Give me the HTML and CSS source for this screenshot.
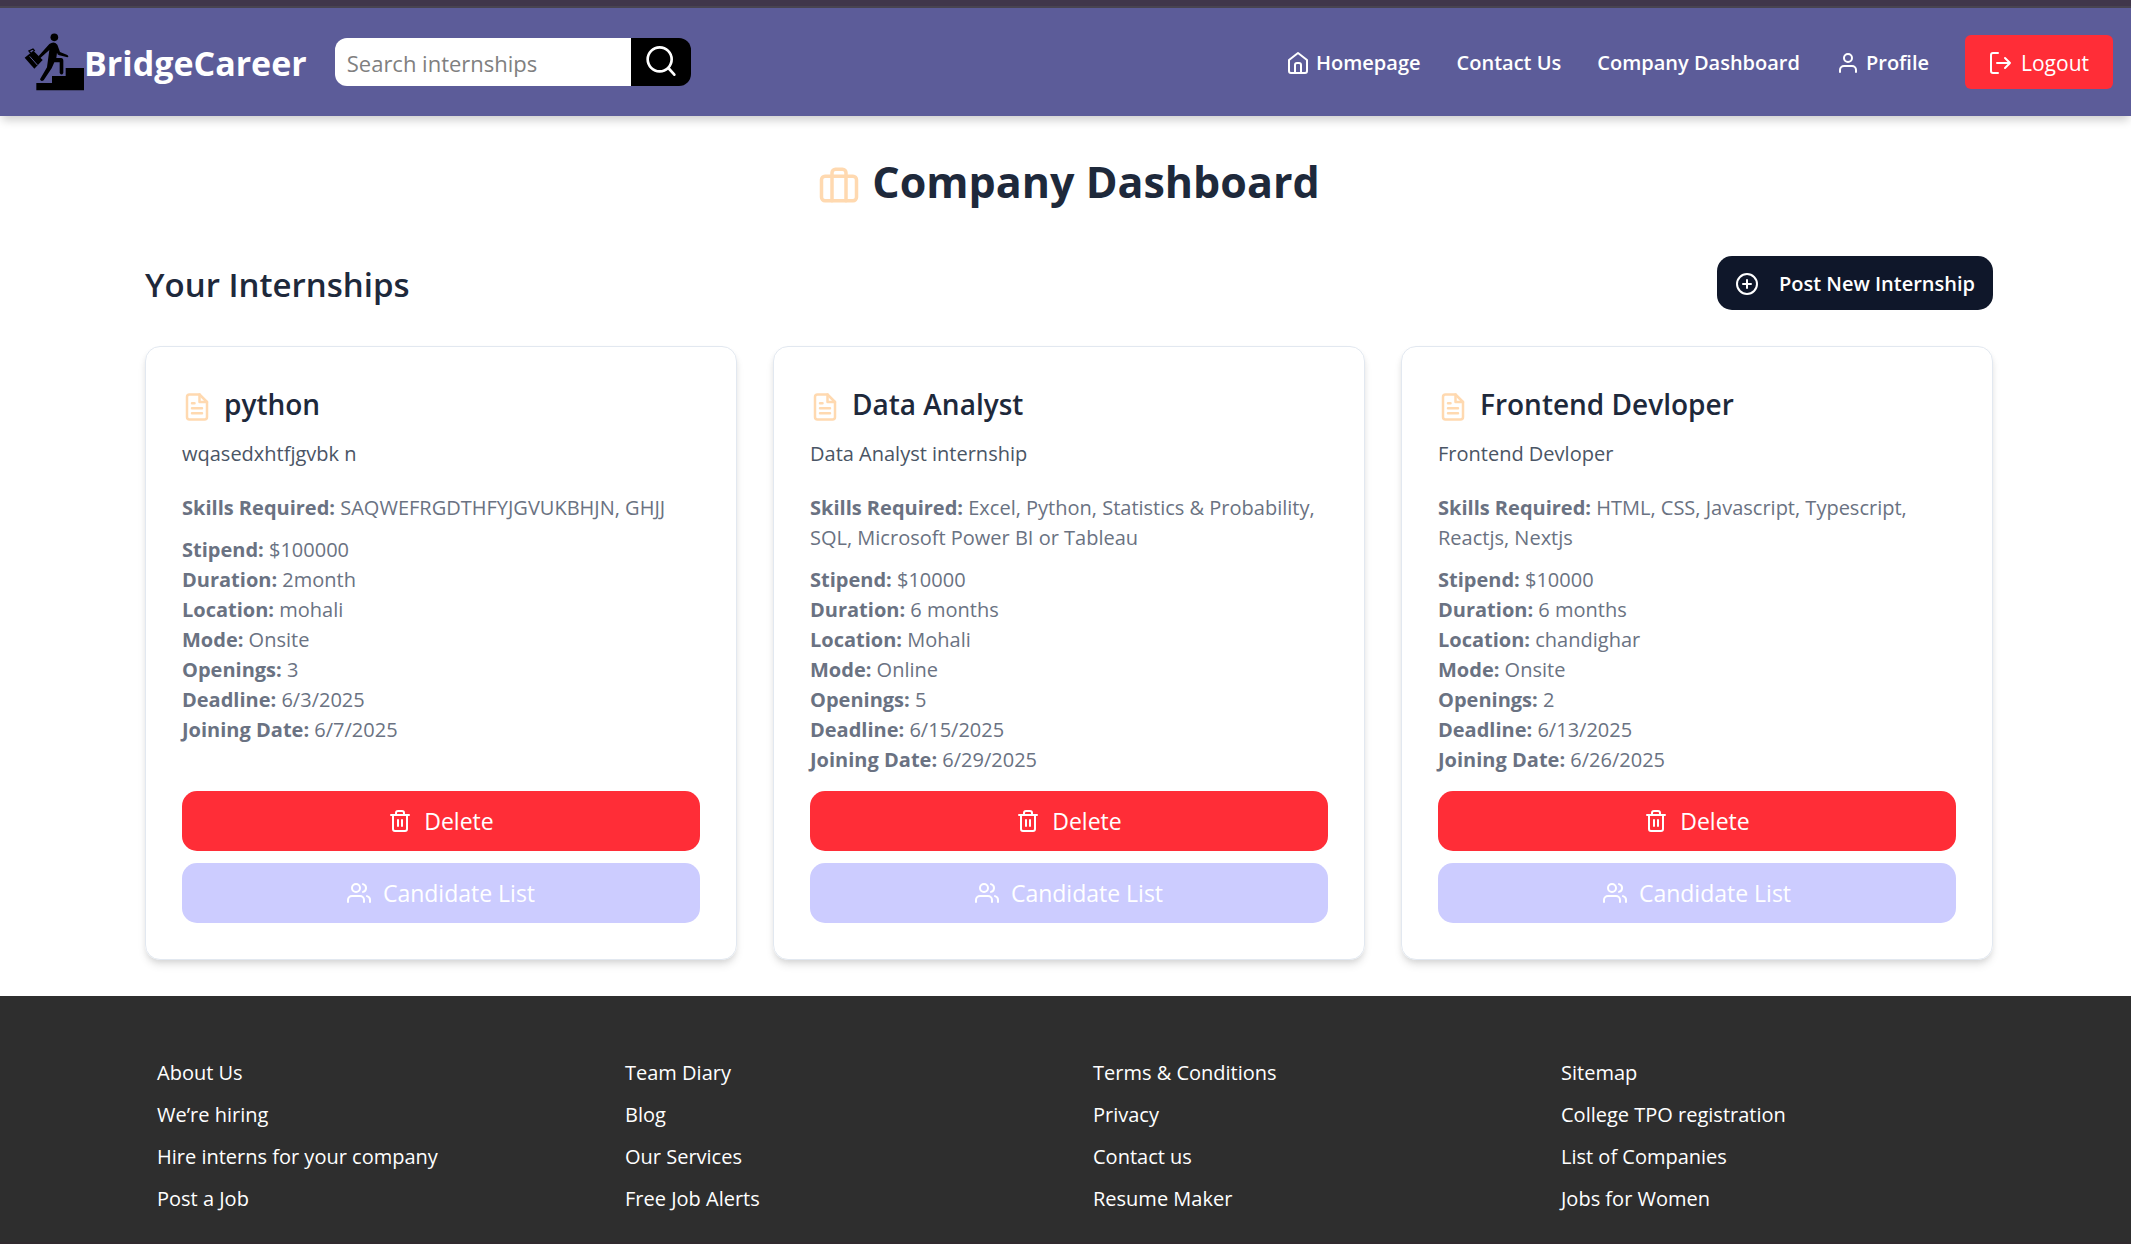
FILE: index.html
```html
<!DOCTYPE html>
<html lang="en">
<head>
<meta charset="utf-8">
<title>BridgeCareer - Company Dashboard</title>
<link rel="stylesheet" href="styles.css">
</head>
<body>
<svg class="sprite" aria-hidden="true">
  <symbol id="file" viewBox="0 0 24 24"><path d="M14 2H6a2 2 0 0 0-2 2v16a2 2 0 0 0 2 2h12a2 2 0 0 0 2-2V8z"/><path d="M14 2v6h6M16 13H8M16 17H8M10 9H8"/></symbol>
  <symbol id="trash" viewBox="0 0 24 24"><path d="M3 6h18M19 6v14a2 2 0 0 1-2 2H7a2 2 0 0 1-2-2V6M8 6V4a2 2 0 0 1 2-2h4a2 2 0 0 1 2 2v2M10 11v6M14 11v6"/></symbol>
  <symbol id="users" viewBox="0 0 24 24"><path d="M17 21v-2a4 4 0 0 0-4-4H5a4 4 0 0 0-4 4v2"/><circle cx="9" cy="7" r="4"/><path d="M23 21v-2a4 4 0 0 0-3-3.87M16 3.13a4 4 0 0 1 0 7.75"/></symbol>
</svg>
<header class="header">
  <a class="brand" href="#">
    <svg class="brand-logo" viewBox="12 24 180 174" aria-hidden="true">
      <circle cx="103" cy="37" r="11.500"/>
      <path d="M49 196v-22h47v-21h41v-24h55v67z"/>
      <path d="M14 98l26-21 28 28-25 26z"/>
      <path d="M32 84l-5-6 12-6 5 6" fill="none" stroke="#000" stroke-width="4"/>
      <path d="M29 94l23 26" fill="none" stroke="#5c5c99" stroke-width="3"/>
      <path d="M88 57q14-10 24 2l8 22 22 9q6 5 0 7l-24-6q-6-2-7-8l-2 16h14q7 0 7 8v37q-5 9-11 0v-32h-16l-8 18-24 36q-8 5-11-3l21-36 7-52-27 24q-6 0-5-6z"/>
    </svg>
    <span>BridgeCareer</span>
  </a>
  <form class="search">
    <input class="search-input" type="text" placeholder="Search internships" aria-label="Search internships">
    <button class="search-button" type="button" aria-label="Search">
      <svg class="icon icon-lg" viewBox="0 0 24 24"><circle cx="11" cy="10" r="9"/><path d="M22 21.500l-4.500-5"/></svg>
    </button>
  </form>
  <nav class="nav">
    <a class="nav-link" href="#"><svg class="icon icon-md" viewBox="0 0 24 24"><path d="M3 9l9-7 9 7v11a2 2 0 0 1-2 2H5a2 2 0 0 1-2-2z"/><path d="M9 22v-8q0-2 2-2h2q2 0 2 2v8"/></svg>Homepage</a>
    <a class="nav-link" href="#">Contact Us</a>
    <a class="nav-link" href="#">Company Dashboard</a>
    <a class="nav-link" href="#"><svg class="icon icon-md" viewBox="0 0 24 24"><path d="M20 21v-2a4 4 0 0 0-4-4H8a4 4 0 0 0-4 4v2"/><circle cx="12" cy="7" r="4"/></svg>Profile</a>
    <button class="logout" type="button"><svg class="icon icon-md" viewBox="0 0 24 24"><path d="M9 22H4a2 2 0 0 1-2-2V4a2 2 0 0 1 2-2h5M16 17l5-5-5-5M21 12H8"/></svg>Logout</button>
  </nav>
</header>
<main class="main">
  <div class="container">
    <h1 class="title"><svg class="icon icon-title" viewBox="0 0 24 24" aria-hidden="true"><rect x="2" y="7" width="20" height="14" rx="2"/><path d="M16 21V5a2 2 0 0 0-2-2h-4a2 2 0 0 0-2 2v16"/></svg>Company Dashboard</h1>
    <div class="toolbar">
      <h2 class="subtitle">Your Internships</h2>
      <button class="post" type="button"><svg class="icon icon-md" viewBox="0 0 24 24"><circle cx="12" cy="12" r="10"/><path d="M12 8v8M8 12h8"/></svg>Post New Internship</button>
    </div>
    <div class="cards">
      <article class="card">
        <h3 class="card-title"><svg class="icon icon-file" aria-hidden="true"><use href="#file"/></svg>python</h3>
        <p class="summary">wqasedxhtfjgvbk n</p>
        <p class="skills"><strong>Skills Required:</strong> SAQWEFRGDTHFYJGVUKBHJN, GHJJ</p>
        <ul class="facts">
          <li><strong>Stipend:</strong> $100000</li>
          <li><strong>Duration:</strong> 2month</li>
          <li><strong>Location:</strong> mohali</li>
          <li><strong>Mode:</strong> Onsite</li>
          <li><strong>Openings:</strong> 3</li>
          <li><strong>Deadline:</strong> 6/3/2025</li>
          <li><strong>Joining Date:</strong> 6/7/2025</li>
        </ul>
        <div class="actions">
          <button class="action delete" type="button"><svg class="icon icon-md" aria-hidden="true"><use href="#trash"/></svg>Delete</button>
          <button class="action candidates" type="button"><svg class="icon icon-md" aria-hidden="true"><use href="#users"/></svg>Candidate List</button>
        </div>
      </article>
      <article class="card">
        <h3 class="card-title"><svg class="icon icon-file" aria-hidden="true"><use href="#file"/></svg>Data Analyst</h3>
        <p class="summary">Data Analyst internship</p>
        <p class="skills"><strong>Skills Required:</strong> Excel, Python, Statistics &amp; Probability, SQL, Microsoft Power BI or Tableau</p>
        <ul class="facts">
          <li><strong>Stipend:</strong> $10000</li>
          <li><strong>Duration:</strong> 6 months</li>
          <li><strong>Location:</strong> Mohali</li>
          <li><strong>Mode:</strong> Online</li>
          <li><strong>Openings:</strong> 5</li>
          <li><strong>Deadline:</strong> 6/15/2025</li>
          <li><strong>Joining Date:</strong> 6/29/2025</li>
        </ul>
        <div class="actions">
          <button class="action delete" type="button"><svg class="icon icon-md" aria-hidden="true"><use href="#trash"/></svg>Delete</button>
          <button class="action candidates" type="button"><svg class="icon icon-md" aria-hidden="true"><use href="#users"/></svg>Candidate List</button>
        </div>
      </article>
      <article class="card">
        <h3 class="card-title"><svg class="icon icon-file" aria-hidden="true"><use href="#file"/></svg>Frontend Devloper</h3>
        <p class="summary">Frontend Devloper</p>
        <p class="skills"><strong>Skills Required:</strong> HTML, CSS, Javascript, Typescript, Reactjs, Nextjs</p>
        <ul class="facts">
          <li><strong>Stipend:</strong> $10000</li>
          <li><strong>Duration:</strong> 6 months</li>
          <li><strong>Location:</strong> chandighar</li>
          <li><strong>Mode:</strong> Onsite</li>
          <li><strong>Openings:</strong> 2</li>
          <li><strong>Deadline:</strong> 6/13/2025</li>
          <li><strong>Joining Date:</strong> 6/26/2025</li>
        </ul>
        <div class="actions">
          <button class="action delete" type="button"><svg class="icon icon-md" aria-hidden="true"><use href="#trash"/></svg>Delete</button>
          <button class="action candidates" type="button"><svg class="icon icon-md" aria-hidden="true"><use href="#users"/></svg>Candidate List</button>
        </div>
      </article>
    </div>
  </div>
</main>
<footer class="footer">
  <div class="footer-grid">
    <ul class="footer-list"><li><a href="#">About Us</a></li><li><a href="#">We’re hiring</a></li><li><a href="#">Hire interns for your company</a></li><li><a href="#">Post a Job</a></li></ul>
    <ul class="footer-list"><li><a href="#">Team Diary</a></li><li><a href="#">Blog</a></li><li><a href="#">Our Services</a></li><li><a href="#">Free Job Alerts</a></li></ul>
    <ul class="footer-list"><li><a href="#">Terms &amp; Conditions</a></li><li><a href="#">Privacy</a></li><li><a href="#">Contact us</a></li><li><a href="#">Resume Maker</a></li></ul>
    <ul class="footer-list"><li><a href="#">Sitemap</a></li><li><a href="#">College TPO registration</a></li><li><a href="#">List of Companies</a></li><li><a href="#">Jobs for Women</a></li></ul>
  </div>
</footer>
</body>
</html>
```
FILE: styles.css
```css
* { box-sizing: border-box; }
body, h1, h2, h3, p, ul { margin: 0; padding: 0; }
ul { list-style: none; }
a { color: inherit; text-decoration: none; }
button, input { font: inherit; border: 0; }
button { cursor: pointer; }
body {
  font-family: "Open Sans", "Noto Sans", sans-serif;
  font-size: 20px;
  line-height: 30px;
  color: #1e293b;
  background: #fff;
}
.sprite { display: none; }
.icon { fill: none; stroke: currentColor; stroke-width: 2; stroke-linecap: round; stroke-linejoin: round; flex: none; }
.icon-md { width: 24px; height: 24px; }
.icon-lg { width: 32px; height: 32px; }
.icon-title, .icon-file { margin-top: 6px; color: #ffd9b0; }
.icon-title { width: 42px; height: 42px; }
.icon-file { width: 30px; height: 30px; }

.header {
  display: flex;
  align-items: center;
  height: 116px;
  padding: 2px 18px 0 24px;
  border-top: 6px solid #40364a;
  background: #5c5c99;
  color: #fff;
  box-shadow: inset 0 2px #484350, 0 6px 9px -2px rgba(0, 0, 0, .2);
}
.brand { display: flex; align-items: center; font-size: 34px; font-weight: 700; line-height: 48px; }
.brand-logo { width: 60px; height: 58px; }
.brand span { padding-top: 2px; }
.search { display: flex; height: 48px; width: 356px; margin-left: 28px; border-radius: 12px; overflow: hidden; }
.search-input { flex: 1; min-width: 0; padding: 2px 12px 0; font-size: 22px; background: #fff; }
.search-input::placeholder { color: #808080; opacity: 1; }
.search-button { display: flex; align-items: center; justify-content: center; width: 60px; padding: 0; background: #000; color: #fff; }
.nav { display: flex; align-items: center; gap: 36px; margin-left: auto; font-weight: 600; }
.nav-link { display: flex; align-items: center; gap: 6px; padding-top: 2px; }
.logout { display: flex; align-items: center; gap: 8px; height: 54px; padding: 2px 24px 0; border-radius: 6px; background: #ff2d37; color: #fff; font-size: 21px; font-weight: 400; }

.main { padding: 36px 36px 36px 43px; }
.container { max-width: 1848px; margin: 0 auto; }
.title { display: flex; align-items: center; justify-content: center; gap: 12px; font-size: 43px; line-height: 60px; font-weight: 700; }
.toolbar { display: flex; align-items: center; justify-content: space-between; margin: 44px 0 36px; }
.subtitle { padding-top: 4px; font-size: 33px; line-height: 50px; font-weight: 600; }
.post { display: flex; align-items: center; gap: 20px; height: 54px; padding: 2px 18px 0; border-radius: 15px; background: #0f172a; color: #fff; font-weight: 600; }
.cards { display: grid; grid-template-columns: repeat(3, 1fr); gap: 36px; }
.card { display: flex; flex-direction: column; padding: 36px; border: 1px solid #e2e8f0; border-radius: 15px; box-shadow: 0 6px 9px -1px rgba(0, 0, 0, .1), 0 3px 6px -2px rgba(0, 0, 0, .1); }
.card-title { display: flex; align-items: center; gap: 12px; font-size: 28px; line-height: 42px; font-weight: 600; }
.summary { margin: 14px 0 24px; color: #4a5565; }
.skills { margin-bottom: 12px; }
.skills, .facts { color: #6a7282; }
.actions { display: flex; flex-direction: column; gap: 12px; margin-top: auto; padding-top: 16px; }
.action { display: flex; align-items: center; justify-content: center; gap: 12px; height: 60px; border-radius: 15px; color: #fff; font-size: 23px; }
.delete { background: #ff2d37; }
.candidates { background: #ccccff; }

.footer { padding: 62px 36px 28px 43px; border-bottom: 2px solid #302a2e; background: #2e2e2e; color: #fff; }
.footer-grid { display: grid; grid-template-columns: repeat(4, 1fr); gap: 48px; max-width: 1824px; margin: 0 auto; }
.footer-list { display: flex; flex-direction: column; gap: 12px; }
```
